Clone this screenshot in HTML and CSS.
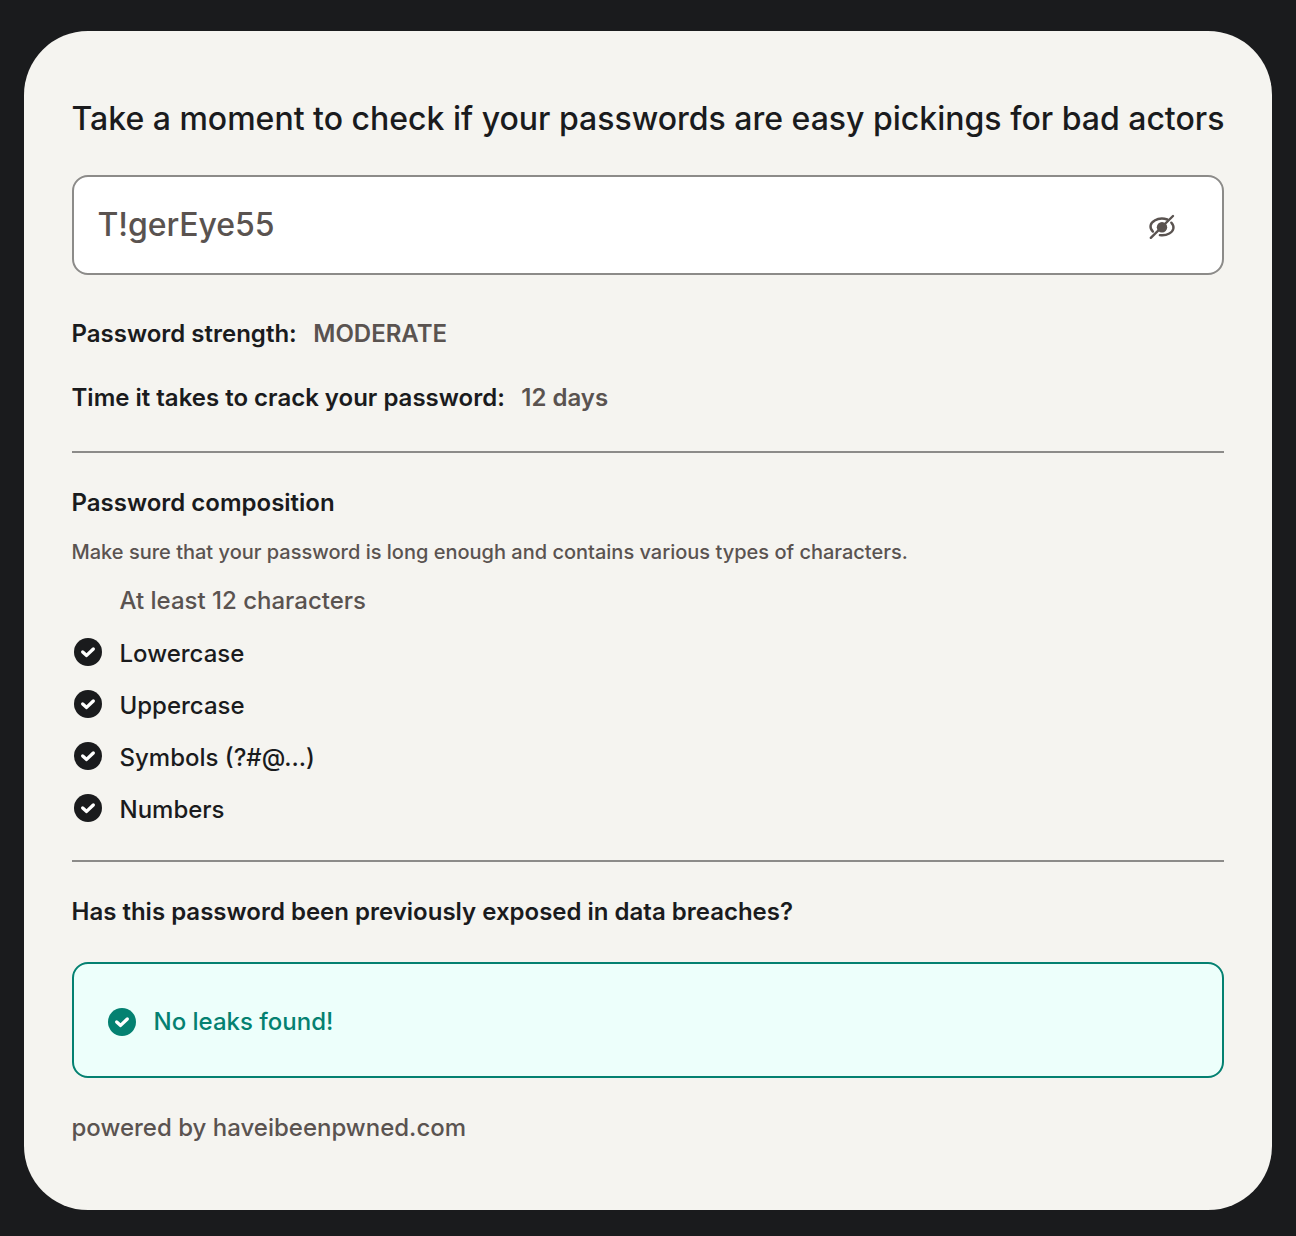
FILE: index.html
```html
<!DOCTYPE html>
<html lang="en">
<head>
<meta charset="utf-8">
<title>Password check</title>
<link rel="stylesheet" href="styles.css">
</head>
<body>
<svg class="sprite" aria-hidden="true">
  <symbol id="check" viewBox="0 0 28 28">
    <circle cx="14" cy="14" r="14" fill="currentColor"/>
    <path class="tick" d="M8.7 13.9 12.6 17.4 19.3 11"/>
  </symbol>
</svg>
<main class="card">
  <h1 class="title">Take a moment to check if your passwords are easy pickings for bad actors</h1>
  <div class="field">
    <span class="value">T!gerEye55</span>
    <svg class="eye" viewBox="0 0 28 28" fill="none" stroke="currentColor" stroke-width="2.4" stroke-linecap="round">
      <circle cx="14" cy="14.2" r="5.2" fill="currentColor" stroke="none"/>
      <path d="M4.9 18.6C.9 14.4 2.2 10 6.6 7.6C10 5.5 15.2 5 19.3 6.5"/>
      <path d="M23.3 9.7C27 13.6 25.8 18 21.3 20.5C18.6 22 15.2 22.6 11.9 22.1"/>
      <path d="M2.8 24.8 25 3"/>
    </svg>
  </div>
  <p class="row strength"><b>Password strength:</b><span class="result">MODERATE</span></p>
  <p class="row time"><b>Time it takes to crack your password:</b><span class="result">12 days</span></p>
  <hr class="rule">
  <h2 class="subtitle">Password composition</h2>
  <p class="hint">Make sure that your password is long enough and contains various types of characters.</p>
  <ul class="list">
    <li class="item missing">At least 12 characters</li>
    <li class="item"><svg class="check"><use href="#check"/></svg>Lowercase</li>
    <li class="item"><svg class="check"><use href="#check"/></svg>Uppercase</li>
    <li class="item"><svg class="check"><use href="#check"/></svg>Symbols (?#@...)</li>
    <li class="item"><svg class="check"><use href="#check"/></svg>Numbers</li>
  </ul>
  <hr class="rule">
  <h2 class="subtitle">Has this password been previously exposed in data breaches?</h2>
  <div class="notice"><svg class="check"><use href="#check"/></svg><span>No leaks found!</span></div>
  <p class="credit">powered by haveibeenpwned.com</p>
</main>
</body>
</html>
```
FILE: styles.css
```css
* { box-sizing: border-box; }
body {
  margin: 0;
  padding: 31px 24px 26px;
  background: #1a1b1d;
  color: #1a1b1d;
  font: 500 24px/32px Inter, "Liberation Sans", sans-serif;
  text-indent: -0.5px;
}
h1, h2, p, ul { margin: 0; padding: 0; font-size: inherit; font-weight: inherit; }
.sprite { position: absolute; width: 0; height: 0; }
.tick { fill: none; stroke: #fff; stroke-width: 3.3; stroke-linecap: round; stroke-linejoin: round; }
.card { height: 1179px; padding: 64px 48px 0; border-radius: 64px; background: #f5f4f0; }
.title { font-size: 32px; line-height: 48px; white-space: nowrap; }
.field {
  display: flex;
  align-items: center;
  justify-content: space-between;
  height: 100px;
  margin-top: 32px;
  padding: 0 46px 0 24px;
  border: 2px solid #8c8b89;
  border-radius: 16px;
  background: #fff;
  color: #5a5350;
}
.value { font-size: 32px; letter-spacing: -0.07px; }
.eye { width: 28px; height: 28px; margin-top: 4px; }
.row { display: flex; gap: 17px; }
.row b, .subtitle { font-weight: 600; }
.strength { margin-top: 43px; }
.time { margin-top: 32px; }
.result { color: #5a5350; font-weight: 600; }
.rule { height: 2px; margin: 37px 0 34px; border: 0; background: #8c8b89; }
.hint { margin-top: 17px; font-size: 20px; color: #5a5350; }
.list { display: flex; flex-direction: column; gap: 20px; margin-top: 17px; list-style: none; }
.item { display: flex; height: 32px; padding-left: 2px; gap: 18px; }
.missing { padding-left: 48px; margin-bottom: 1px; color: #5a5350; }
.check { flex: none; width: 28px; height: 28px; }
.list + .rule { margin-top: 34px; }
.notice {
  display: flex;
  align-items: center;
  gap: 18px;
  height: 116px;
  margin-top: 34px;
  padding: 4px 34px 0;
  border: 2px solid #048171;
  border-radius: 16px;
  background: #edfffb;
  color: #048171;
}
.credit { margin-top: 34px; color: #5a5350; }
```
